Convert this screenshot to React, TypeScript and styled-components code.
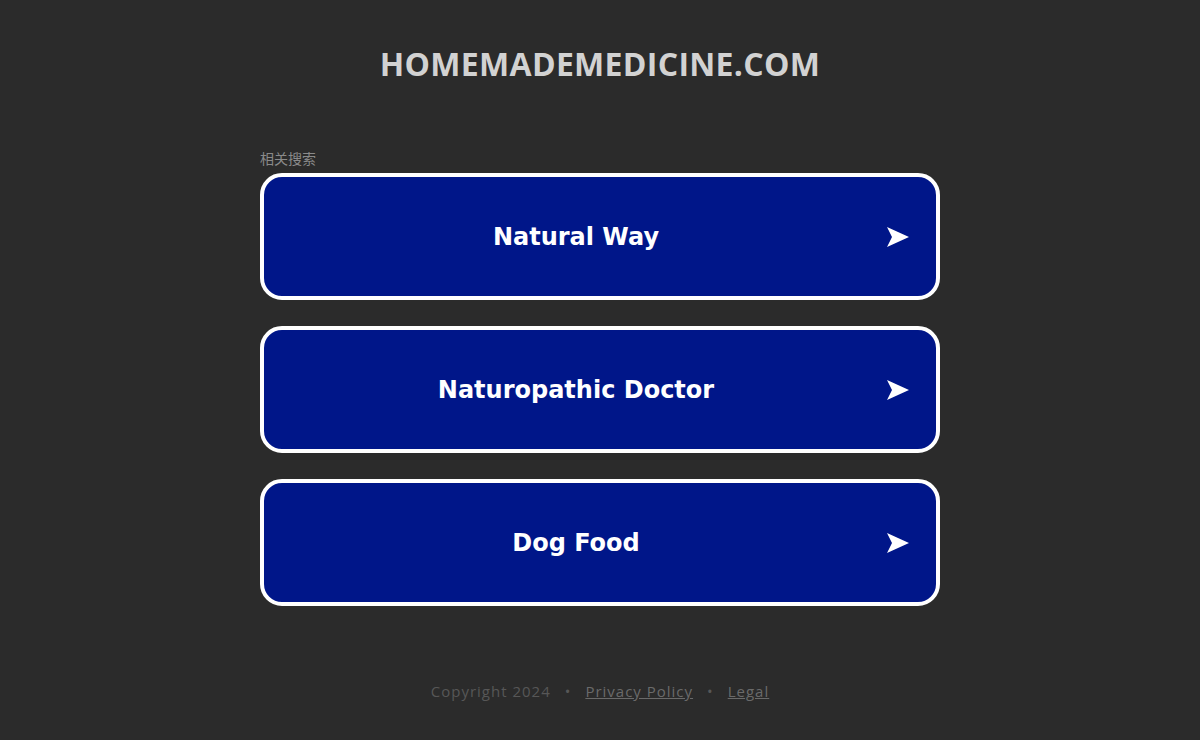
import React from 'react';
import styled, { createGlobalStyle } from 'styled-components';

const GlobalStyle = createGlobalStyle`
  html, body {
    margin: 0;
    padding: 0;
    background: #2b2b2b;
  }
`;

const Page = styled.div`
  width: 1200px;
  min-height: 740px;
  display: flex;
  flex-direction: column;
  align-items: center;
  background: #2b2b2b;
`;

const Domain = styled.h1`
  margin: 43px 0 0;
  font-family: 'Open Sans', 'Liberation Sans', sans-serif;
  font-weight: 700;
  font-size: 32px;
  line-height: 42px;
  letter-spacing: 0.3px;
  color: #d2d2d2;
`;

const Results = styled.div`
  width: 680px;
  margin-top: 65px;
  display: flex;
  flex-direction: column;
`;

const Label = styled.div`
  font-family: 'Noto Sans CJK SC', sans-serif;
  font-size: 14px;
  line-height: 16px;
  color: #8a8a8a;
  margin-bottom: 7px;
`;

const List = styled.div`
  display: flex;
  flex-direction: column;
  gap: 26px;
`;

const Link = styled.a`
  position: relative;
  height: 127px;
  box-sizing: border-box;
  border: 4px solid #ffffff;
  border-radius: 22px;
  background: #001689;
  padding-right: 48px;
  display: flex;
  align-items: center;
  justify-content: center;
  text-decoration: none;
  font-family: 'DejaVu Sans', Verdana, sans-serif;
  font-weight: 700;
  font-size: 24px;
  color: #ffffff;
  cursor: pointer;
`;

const Arrow = styled.span`
  position: absolute;
  right: 27px;
  top: 50%;
  transform: translateY(-50%);
  display: flex;
`;

const Footer = styled.div`
  margin-top: 75px;
  display: flex;
  gap: 14px;
  align-items: center;
  font-family: 'Open Sans', 'Liberation Sans', sans-serif;
  font-size: 15px;
  letter-spacing: 1px;
  color: #575757;
`;

const FooterLink = styled.a`
  color: #6a6a6a;
  text-decoration: underline;
`;

const terms = ['Natural Way', 'Naturopathic Doctor', 'Dog Food'];

const App = (): JSX.Element => (
  <>
    <GlobalStyle />
    <Page>
      <Domain>HOMEMADEMEDICINE.COM</Domain>
      <Results>
        <Label>相关搜索</Label>
        <List>
          {terms.map((t) => (
            <Link key={t}>
              {t}
              <Arrow>
                <svg width="22" height="20" viewBox="0 0 22 20">
                  <path d="M0 0 L22 10 L0 20 L5 10 Z" fill="#ffffff" />
                </svg>
              </Arrow>
            </Link>
          ))}
        </List>
      </Results>
      <Footer>
        <span>Copyright 2024</span>
        <span>•</span>
        <FooterLink>Privacy Policy</FooterLink>
        <span>•</span>
        <FooterLink>Legal</FooterLink>
      </Footer>
    </Page>
  </>
);

export default App;
